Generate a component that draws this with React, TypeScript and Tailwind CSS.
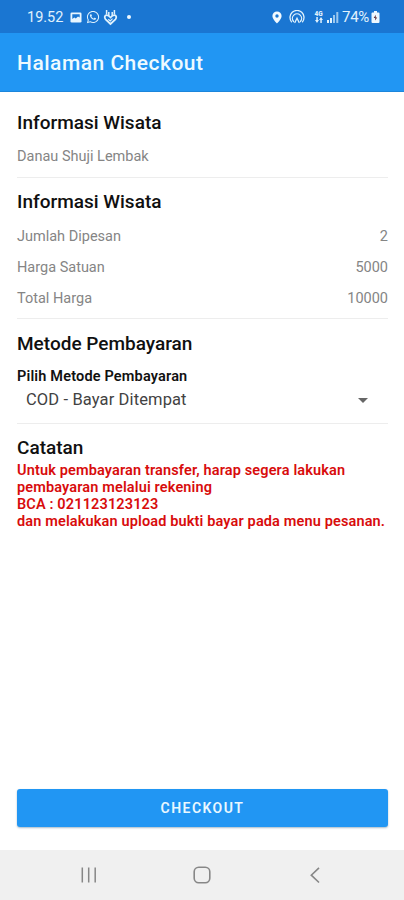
import type { ReactNode } from "react";
import { FaWhatsapp } from "react-icons/fa";

function StatusBar() {
  return (
    <div className="flex h-[33px] shrink-0 items-center bg-[#1a76d2] pt-px pr-6 pl-[27px] text-[15px] text-[#e0f2fd]">
      <span className="w-[43px] pt-px text-[14.5px]">19.52</span>
      <svg className="h-[11px] w-[12px]" viewBox="0 0 12 11">
        <rect x="0.5" y="0.5" width="11" height="10" rx="1.3" fill="#e8f6ff" />
        <path d="M2.3 2.3h7.4v3.1L8 4.4 5.8 6.5 4.3 5.6 2.3 7z" fill="#1a76d2" />
      </svg>
      <FaWhatsapp className="ml-[4px] h-[14px] w-[14px]" />
      <svg className="ml-[3px] h-[17px] w-[15px]" viewBox="0 0 15 17" fill="none" stroke="currentColor" strokeWidth="1.8">
        <path d="M7.5 15 2.6 10.300C1 8.500 1.700 6.200 3.700 6.200c1.500 0 2.600 1 3.800 2.300 1.200-1.300 2.300-2.300 3.800-2.300 2 0 2.700 2.300 1.100 4.100z" />
        <path d="m5.300 10.200 2 1.700 2.200-2.200" strokeWidth="1.200" />
        <path d="M3.600 1v4.500M5.800 3v4M11.400 1v4.500M9.200 3v4" strokeWidth="1.500" />
      </svg>
      <span className="ml-[9px] h-[4px] w-[4px] rounded-full bg-[#eef8ff]" />
      <svg className="ml-auto h-[13px] w-[10px]" viewBox="0 0 10 13">
        <path fill="#f2faff" fillRule="evenodd" d="M5 .5A4.6 4.6 0 0 0 .4 5.1C.4 8.3 5 12.5 5 12.5s4.6-4.2 4.6-7.4A4.6 4.6 0 0 0 5 .5Zm0 2.8a1.7 1.7 0 1 1 0 3.4 1.7 1.7 0 0 1 0-3.4Z" />
      </svg>
      <svg className="ml-[7px] h-[14px] w-[16px]" viewBox="0 0 16 14" fill="none" stroke="currentColor" strokeWidth="1.3" strokeLinecap="round">
        <path d="M2.500 11.800a7 7 0 1 1 11 0" />
        <path d="M4.600 11.500a4.600 4.600 0 1 1 6.800 0" />
        <path d="m5.900 12.500 2.100-4.300 2.100 4.300" />
      </svg>
      <span className="ml-[9px] flex w-[9px] flex-col items-center text-[6.5px] leading-[6px] font-black">
        <span>4G</span>
        <svg className="h-[6px] w-[8px]" viewBox="0 0 8 6" fill="currentColor">
          <path d="M1.300 0h1.500v3H4L2 6 0 3h1.300zM5.300 6h1.500V3H8L6 0 4 3h1.300z" />
        </svg>
      </span>
      <svg className="ml-[3px] h-[12px] w-[13px]" viewBox="0 0 13 12" fill="currentColor">
        <path d="M1 9h2v3H1zM4 7h2v5H4z" />
        <path d="M7 4h2v8H7zM10.3 1h2v11h-2z" opacity=".65" />
      </svg>
      <span className="ml-[3px] w-[28px] text-[15px] tracking-[-0.3px] whitespace-nowrap">74%</span>
      <svg className="ml-px h-[12px] w-[9px]" viewBox="0 0 9 12">
        <path d="M3 0h3v1.5h1.5q1 0 1 1V11q0 1-1 1h-6q-1 0-1-1V2.500q0-1 1-1H3z" fill="#eef8ff" />
        <path d="M4.9 3.800 2.700 7h1.600l-.3 2.600L6.200 6.400H4.600z" fill="#55252f" />
      </svg>
    </div>
  );
}

function Heading({ children }: { children: ReactNode }) {
  return <h2 className="text-[19px] leading-[24px] font-medium text-[#101010]">{children}</h2>;
}

function Row({ label, value }: { label: string; value?: string }) {
  return (
    <div className="flex h-[31px] items-center justify-between text-[14.5px] text-[#858585]">
      <span>{label}</span>
      <span>{value}</span>
    </div>
  );
}

function NavigationBar() {
  return (
    <div className="flex h-[50px] shrink-0 items-center justify-between bg-[#f0f0f0] px-[80px] text-[#878787]">
      <svg className="h-[18px] w-[18px]" viewBox="0 0 18 18" stroke="currentColor" strokeWidth="1.5">
        <path d="M2.300 1.500v15M8.700 1.500v15M15.200 1.500v15" />
      </svg>
      <svg className="h-[18px] w-[18px]" viewBox="0 0 18 18" fill="none" stroke="currentColor" strokeWidth="1.600">
        <rect x="1.200" y="1.300" width="15.600" height="15.400" rx="4.500" />
      </svg>
      <svg className="h-[18px] w-[18px]" viewBox="0 0 18 18" fill="none" stroke="currentColor" strokeWidth="1.600">
        <path d="m13 1.800-7.700 7.400L13 16.500" />
      </svg>
    </div>
  );
}

export default function App() {
  return (
    <div className="flex h-[900px] w-[404px] flex-col overflow-hidden bg-white font-[Roboto,sans-serif]">
      <StatusBar />
      <header className="flex h-[59px] shrink-0 items-center border-b border-[#1c86db] bg-[#2196f3] px-[17px] pt-[2px]">
        <h1 className="text-[21px] leading-[26px] font-medium tracking-[0.5px] text-[#eefaff]">Halaman Checkout</h1>
      </header>
      <main className="flex flex-1 flex-col pr-[16px] pl-[17px]">
        <section className="h-[86px] border-b border-[#ededed] pt-[19px]">
          <Heading>Informasi Wisata</Heading>
          <div className="pt-[6px]">
            <Row label="Danau Shuji Lembak" />
          </div>
        </section>
        <section className="h-[141px] border-b border-[#ededed] pt-[12px]">
          <Heading>Informasi Wisata</Heading>
          <div className="pt-[7px]">
            <Row label="Jumlah Dipesan" value="2" />
            <Row label="Harga Satuan" value="5000" />
            <Row label="Total Harga" value="10000" />
          </div>
        </section>
        <section className="h-[105px] border-b border-[#ededed] pt-[13px]">
          <Heading>Metode Pembayaran</Heading>
          <p className="mt-[12px] text-[14.5px] leading-[18px] font-semibold tracking-[0.17px] text-[#111]">Pilih Metode Pembayaran</p>
          <div className="flex h-[28px] items-center justify-between pr-5 pl-[9px] text-[16.500px] tracking-[0.12px] text-[#424242]">
            <span>COD - Bayar Ditempat</span>
            <svg className="h-[5px] w-[10px]" viewBox="0 0 10 5" fill="#666">
              <path d="M0 0h10L5 5z" />
            </svg>
          </div>
        </section>
        <section className="pt-[12px]">
          <Heading>Catatan</Heading>
          <p className="mt-[2px] text-[14.5px] leading-[17px] font-semibold tracking-[0.14px] whitespace-nowrap text-[#d80c0c]">
            Untuk pembayaran transfer, harap segera lakukan
            <br />
            pembayaran melalui rekening
            <br />
            BCA : 021123123123
            <br />
            dan melakukan upload bukti bayar pada menu pesanan.
          </p>
        </section>
        <button className="mt-auto mb-[23px] h-[38px] w-full shrink-0 rounded-[3px] bg-[#2196f3] text-[14px] font-semibold tracking-[1.450px] text-[#e9f8ff] shadow-[0_1px_2px_rgba(0,60,100,0.35)]">
          CHECKOUT
        </button>
      </main>
      <NavigationBar />
    </div>
  );
}
